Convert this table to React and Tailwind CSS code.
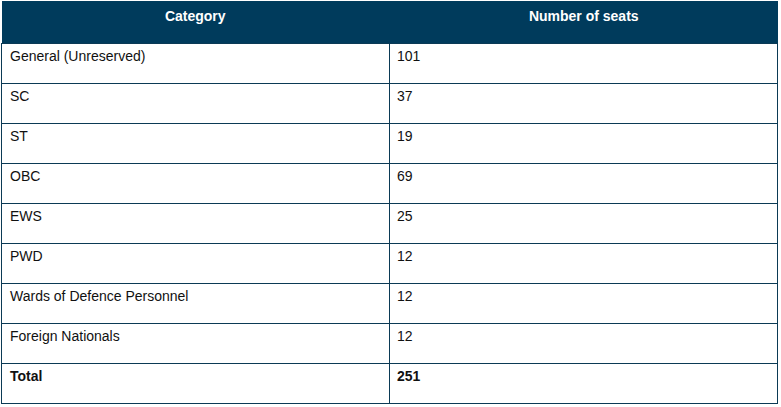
import React from 'react';

const rows = [
    ['General (Unreserved)', '101'],
    ['SC', '37'],
    ['ST', '19'],
    ['OBC', '69'],
    ['EWS', '25'],
    ['PWD', '12'],
    ['Wards of Defence Personnel', '12'],
    ['Foreign Nationals', '12'],
];

const App = () => {
    return (
        <div className="bg-white w-[781px] h-[407px] p-[1px]" style={{ fontFamily: '"Liberation Sans", Arial, sans-serif' }}>
            <table className="w-[777px] table-fixed border-collapse text-[14px] text-[#111]">
                <thead>
                    <tr className="bg-[#003b5c] text-white h-[42px]">
                        <th className="w-[388px] align-top pt-[5px] font-bold text-center leading-[20px]">Category</th>
                        <th className="align-top pt-[5px] font-bold text-center leading-[20px] border-l border-[#003b5c]">Number of seats</th>
                    </tr>
                </thead>
                <tbody>
                    {rows.map(([cat, seats]) => (
                        <tr key={cat} className="h-[40px]">
                            <td className="border border-[#0b3a55] align-top pt-[2px] px-[8px] leading-[20px]">{cat}</td>
                            <td className="border border-[#0b3a55] align-top pt-[2px] px-[7px] leading-[20px]">{seats}</td>
                        </tr>
                    ))}
                    <tr className="h-[40px] font-bold">
                        <td className="border border-[#0b3a55] align-top pt-[2px] px-[8px] leading-[20px]">Total</td>
                        <td className="border border-[#0b3a55] align-top pt-[2px] px-[7px] leading-[20px]">251</td>
                    </tr>
                </tbody>
            </table>
        </div>
    );
};

export default App;
